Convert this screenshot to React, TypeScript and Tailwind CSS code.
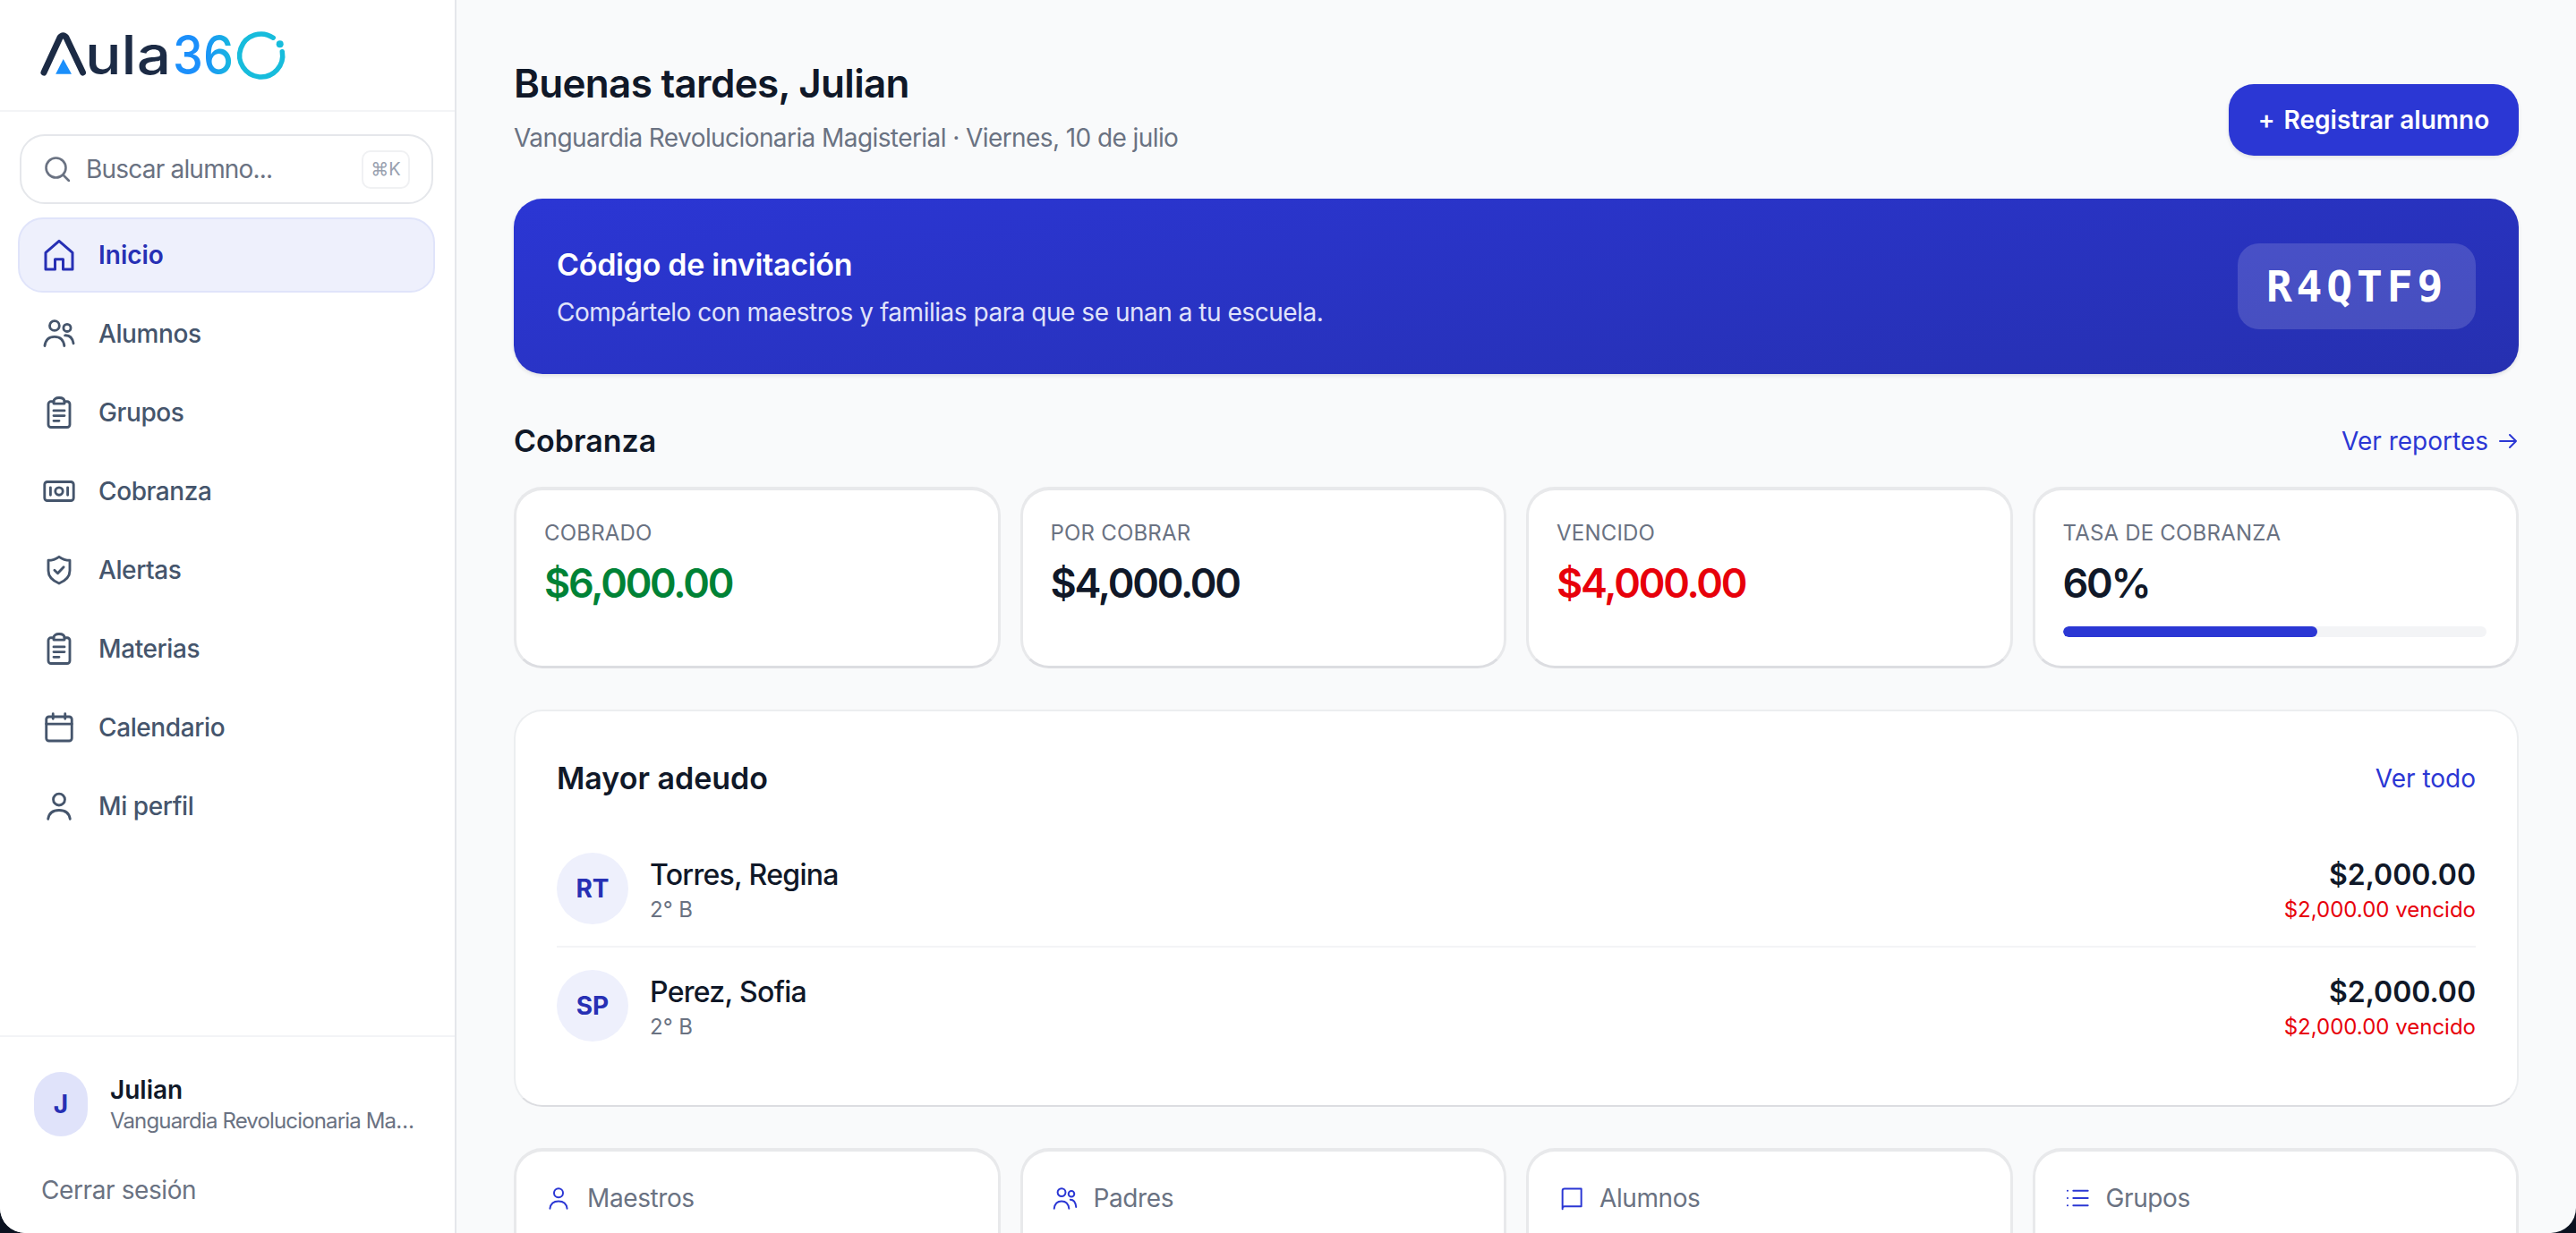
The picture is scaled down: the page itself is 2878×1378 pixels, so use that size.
import React from "react";

const I = ({ children, cls, sw }: { children: React.ReactNode; cls?: string; sw?: number }) => (
  <svg viewBox="0 0 24 24" fill="none" stroke="currentColor" strokeWidth={sw ?? 1.9} strokeLinecap="round" strokeLinejoin="round" className={cls ?? "w-[36px] h-[36px] shrink-0"}>
    {children}
  </svg>
);

const HomeI = () => <I sw={2}><path d="M12 1.600 22 10.200V22.600H15V15.200H9V22.600H2V10.200Z" /></I>;
const UsersI = () => (
  <I>
    <circle cx="8.600" cy="6" r="3.600" />
    <circle cx="18" cy="7.600" r="2.700" />
    <path d="M1.300 21c.6-4.400 3.400-6.800 7.300-6.800s6.700 2.400 7.300 6.800" />
    <path d="M16.400 13.200c3.300-.2 5.600 2 6.300 6" />
  </I>
);
const ClipI = () => (
  <I>
    <path d="M8 3.800H6.200A2 2 0 0 0 4 5.800V21a2 2 0 0 0 2 2h12a2 2 0 0 0 2-2V5.800a2 2 0 0 0-2-2H16" />
    <path d="M8 3.800C8 2 9.600 1 12 1s4 1 4 2.800V5.400H8Z" />
    <path d="M8 10.600H16M8 14.400H16M8 18.200H12" />
  </I>
);
const BankI = () => (
  <I>
    <rect x="1.200" y="5" width="21.600" height="14" rx="2" />
    <circle cx="12" cy="12" r="2.800" />
    <path d="M5.600 9.200V14.800M18.400 9.200V14.800" />
  </I>
);
const ShieldI = () => (
  <I>
    <path d="M12 2.200C14.500 4 17 4.800 20 4.800V12.500C20 16.800 16.800 20 12 22C7.200 20 4 16.800 4 12.500V4.800C7 4.800 9.500 4 12 2.200Z" />
    <path d="M8.600 12.200 11 14.500 15.400 9.800" />
  </I>
);
const CalI = () => (
  <I>
    <rect x="2.500" y="4" width="19" height="18" rx="2" />
    <path d="M2.500 9.400H21.500M7.500 1.800V5.500M16.500 1.800V5.500" />
  </I>
);
const UserI = () => (
  <I>
    <circle cx="12" cy="7" r="4.300" />
    <path d="M3.800 21.500C4.500 17 7.600 15 12 15s7.500 2 8.200 6.500" />
  </I>
);

const nav = [
  { l: "Alumnos", i: <UsersI /> },
  { l: "Grupos", i: <ClipI /> },
  { l: "Cobranza", i: <BankI /> },
  { l: "Alertas", i: <ShieldI /> },
  { l: "Materias", i: <ClipI /> },
  { l: "Calendario", i: <CalI /> },
  { l: "Mi perfil", i: <UserI /> },
];

const Logo = () => (
  <svg viewBox="45 35 273 52" className="w-[273px] h-[52px] overflow-visible">
    <defs>
      <linearGradient id="g36" x1="197" y1="0" x2="262" y2="0" gradientUnits="userSpaceOnUse">
        <stop offset="0.45" stopColor="#1b8ffb" />
        <stop offset="1" stopColor="#17bcdc" />
      </linearGradient>
    </defs>
    <path d="M49 80 L67 41 Q70.500 36.500 74 41 L92.500 80" stroke="#1c2b45" strokeWidth="7" fill="none" strokeLinecap="round" strokeLinejoin="round" />
    <path d="M70.700 65 L80 81.700 H62.200 Z" fill="#1b8ffb" />
    <text x="95" y="81.700" fontFamily="Inter, sans-serif" fontWeight="500" fontSize="60" fill="#1c2b45" textLength="96" lengthAdjust="spacingAndGlyphs">ula</text>
    <text x="193" y="82" fontFamily="Inter, sans-serif" fontWeight="500" fontSize="60" fill="url(#g36)" textLength="68" lengthAdjust="spacingAndGlyphs">36</text>
    <path d="M305.200 41.200 A24 24 0 1 0 315.300 56.800" stroke="#17bcdc" strokeWidth="5.500" fill="none" strokeLinecap="round" />
    <circle cx="312.700" cy="48.300" r="4" fill="#17bcdc" />
  </svg>
);

const Stat = ({ label, value, color, children }: { label: string; value: string; color: string; children?: React.ReactNode }) => (
  <div className="bg-white border-[3px] border-t-[4px] border-[#e8e9eb] border-b-[#dcdde1] rounded-[32px] pl-[31px] pr-[33px] pt-[32px] h-[203px]">
    <div className="text-[24px] leading-[32px] tracking-[0.2px] text-[#6a7282]">{label}</div>
    <div className={`text-[45px] leading-[60px] mt-[10px] font-semibold tracking-[-2.2px] ${color}`}>{value}</div>
    {children}
  </div>
);

const Row = ({ ini, name, border }: { ini: string; name: string; border?: boolean }) => (
  <div className={`flex items-center h-[130px] ${border ? "border-b-2 border-[#f3f4f6]" : ""}`}>
    <div className="w-[80px] h-[80px] rounded-full bg-[#eef0fc] flex items-center justify-center text-[28px] font-bold text-[#2730b4]">{ini}</div>
    <div className="ml-[24px] pt-[4px]">
      <div className="text-[32px] leading-[42px] font-medium tracking-[-0.7px] text-[#101828]">{name}</div>
      <div className="text-[24px] leading-[32px] text-[#6a7282] mt-[2px]">2° B</div>
    </div>
    <div className="ml-auto text-right pt-[4px]">
      <div className="text-[32px] leading-[42px] font-semibold text-[#101828]">$2,000.00</div>
      <div className="text-[24px] leading-[32px] text-[#e7000b] mt-[2px]">$2,000.00 vencido</div>
    </div>
  </div>
);

const Bottom = ({ label, icon }: { label: string; icon: React.ReactNode }) => (
  <div className="bg-white border-[3px] border-t-[4px] border-[#e8e9eb] rounded-[32px] h-[203px] px-[33px] pt-[32px]">
    <div className="flex items-center gap-[18px] h-[40px]">
      <span className="text-[#2b37d4]">{icon}</span>
      <span className="text-[28px] tracking-[-0.4px] text-[#6a7282]">{label}</span>
    </div>
  </div>
);

const small = "w-[28px] h-[28px] shrink-0";

export default function App() {
  return (
    <div className="h-[1378px] bg-[#0b1220] font-['Inter',sans-serif]">
      <div className="h-[1378px] rounded-b-[28px] overflow-hidden flex bg-[#f9fafb]">
        <aside className="w-[510px] shrink-0 bg-white border-r-[2px] border-[#e5e7eb] flex flex-col">
          <div className="h-[125px] shrink-0 border-b-2 border-[#f3f4f6] flex items-center pl-[45px]">
            <Logo />
          </div>
          <div className="mt-[25px] ml-[22px] mr-[24px] h-[78px] border-2 border-[#e5e7eb] rounded-[28px] flex items-center pl-[26px] pr-[24px]">
            <svg viewBox="0 0 28 28" fill="none" stroke="#6a7282" strokeWidth="2.600" strokeLinecap="round" className="w-[28px] h-[28px] shrink-0">
              <circle cx="12.500" cy="12.500" r="11" />
              <path d="M20.500 20.500 27 27" />
            </svg>
            <span className="ml-[18px] text-[28px] tracking-[-0.8px] text-[#6a7282]">Buscar alumno...</span>
            <span className="ml-auto w-[54px] h-[43px] border-2 border-[#f0f1f3] rounded-[10px] flex items-center justify-center text-[20px] text-[#99a1af]">⌘K</span>
          </div>
          <nav className="mt-[15px] ml-[20px] mr-[22px] flex flex-col gap-[4px]">
            <div className="h-[84px] rounded-[28px] bg-[#eef0fc] border-2 border-[#e0e4fa] flex items-center pl-[26px] gap-[26px] text-[#2730b4] font-semibold text-[28px]">
              <HomeI />
              <span>Inicio</span>
            </div>
            {nav.map((n) => (
              <div key={n.l} className="h-[84px] flex items-center pl-[28px] gap-[26px] text-[#45556c] font-medium text-[28px] tracking-[-0.4px]">
                {n.i}
                <span>{n.l}</span>
              </div>
            ))}
          </nav>
          <div className="mt-auto border-t-2 border-[#f3f4f6] pt-[39px] pb-[28px]">
            <div className="flex items-center pl-[38px] gap-[25px]">
              <div className="w-[60px] h-[72px] shrink-0 rounded-full bg-[#e0e3fa] flex items-center justify-center text-[28px] font-bold text-[#2730b4]">J</div>
              <div className="w-[345px]">
                <div className="text-[28px] leading-[38px] font-semibold text-[#101828]">Julian</div>
                <div className="text-[24px] leading-[32px] tracking-[-0.85px] text-[#6a7282] truncate">Vanguardia Revolucionaria Magisterial</div>
              </div>
            </div>
            <div className="mt-[40px] ml-[46px] text-[28px] leading-[40px] tracking-[-0.4px] text-[#6a7282]">Cerrar sesión</div>
          </div>
        </aside>
        <main className="flex-1 min-w-0 overflow-hidden px-[64px] pt-[64px]">
          <div className="flex items-end justify-between h-[110px]">
            <div>
              <h1 className="text-[44px] leading-[58px] font-semibold tracking-[-0.7px] text-[#101828]">Buenas tardes, Julian</h1>
              <p className="mt-[12px] text-[28px] leading-[40px] tracking-[-0.58px] text-[#6a7282]">Vanguardia Revolucionaria Magisterial · Viernes, 10 de julio</p>
            </div>
            <div className="w-[324px] h-[80px] rounded-[28px] bg-[#2b37d4] shadow-[0_2px_4px_rgba(0,0,0,0.1)] text-white text-[28px] font-semibold flex items-center justify-center gap-[10px]">
              <span>+</span>
              <span>Registrar alumno</span>
            </div>
          </div>
          <div className="mt-[48px] h-[196px] rounded-[32px] bg-[linear-gradient(172deg,#2b36d4,#2630b0)] shadow-[0_2px_4px_rgba(0,0,0,0.1)] flex items-center justify-between px-[48px]">
            <div className="pt-[2px]">
              <div className="text-[34px] leading-[46px] font-semibold tracking-[-0.3px] text-white">Código de invitación</div>
              <div className="mt-[10px] text-[28px] leading-[40px] tracking-[-0.48px] text-[#e0e3fa]">Compártelo con maestros y familias para que se unan a tu escuela.</div>
            </div>
            <div className="w-[266px] h-[96px] rounded-[24px] bg-white/15 flex items-center justify-center font-['DejaVu_Sans_Mono',monospace] font-bold text-[48px] tracking-[4.800px] text-white">R4QTF9</div>
          </div>
          <div className="mt-[46px] h-[56px] flex items-center justify-between">
            <h2 className="text-[34px] font-semibold text-[#101828]">Cobranza</h2>
            <div className="pt-[2px] text-[28px] text-[#2b37d4] flex items-center gap-[10px]">
              Ver reportes
              <svg viewBox="0 0 24 24" fill="none" stroke="currentColor" strokeWidth="2" strokeLinecap="round" strokeLinejoin="round" className="w-[24px] h-[24px]"><path d="M3 12H21M14 5l7 7-7 7" /></svg>
            </div>
          </div>
          <div className="mt-[24px] grid grid-cols-4 gap-[22px]">
            <Stat label="COBRADO" value="$6,000.00" color="text-[#008236]" />
            <Stat label="POR COBRAR" value="$4,000.00" color="text-[#101828]" />
            <Stat label="VENCIDO" value="$4,000.00" color="text-[#e7000b]" />
            <Stat label="TASA DE COBRANZA" value="60%" color="text-[#101828]">
              <div className="mt-[18px] h-[12px] rounded-full bg-[#f3f4f6] overflow-hidden">
                <div className="h-[12px] w-[60%] rounded-full bg-[#2b37d4]" />
              </div>
            </Stat>
          </div>
          <section className="mt-[46px] bg-white border-2 border-[#eceef0] border-b-[#dcdde1] rounded-[32px] px-[46px] pt-[46px] h-[444px]">
            <div className="flex items-center justify-between h-[56px]">
              <h3 className="text-[34px] font-semibold text-[#101828]">Mayor adeudo</h3>
              <span className="text-[28px] pt-[2px] text-[#2b37d4]">Ver todo</span>
            </div>
            <div className="mt-[32px]">
              <Row ini="RT" name="Torres, Regina" border />
              <Row ini="SP" name="Perez, Sofia" />
            </div>
          </section>
          <div className="mt-[46px] grid grid-cols-4 gap-[22px]">
            <Bottom label="Maestros" icon={<I sw={1.7} cls={small}><circle cx="12" cy="7" r="4.300" /><path d="M3.800 22C4.500 17 7.600 15 12 15s7.500 2 8.200 7" /></I>} />
            <Bottom label="Padres" icon={<I sw={1.7} cls={small}><circle cx="8.600" cy="6.500" r="3.800" /><circle cx="18" cy="8" r="2.800" /><path d="M1.500 22c.6-4.500 3.400-7 7.100-7s6.500 2.500 7.100 7M17 13.500c3.200 0 5 2.500 5.500 7" /></I>} />
            <Bottom label="Alumnos" icon={<I sw={1.7} cls={small}><path d="M4 22.500V5a2 2 0 0 1 2-2H22V20H6a2 2 0 0 0-2 2.500Z" /></I>} />
            <Bottom label="Grupos" icon={<I sw={1.7} cls={small}><path d="M8 5H22M8 12H22M8 19H22M2.500 5H2.600M2.500 12H2.600M2.500 19H2.600" /></I>} />
          </div>
        </main>
      </div>
    </div>
  );
}
